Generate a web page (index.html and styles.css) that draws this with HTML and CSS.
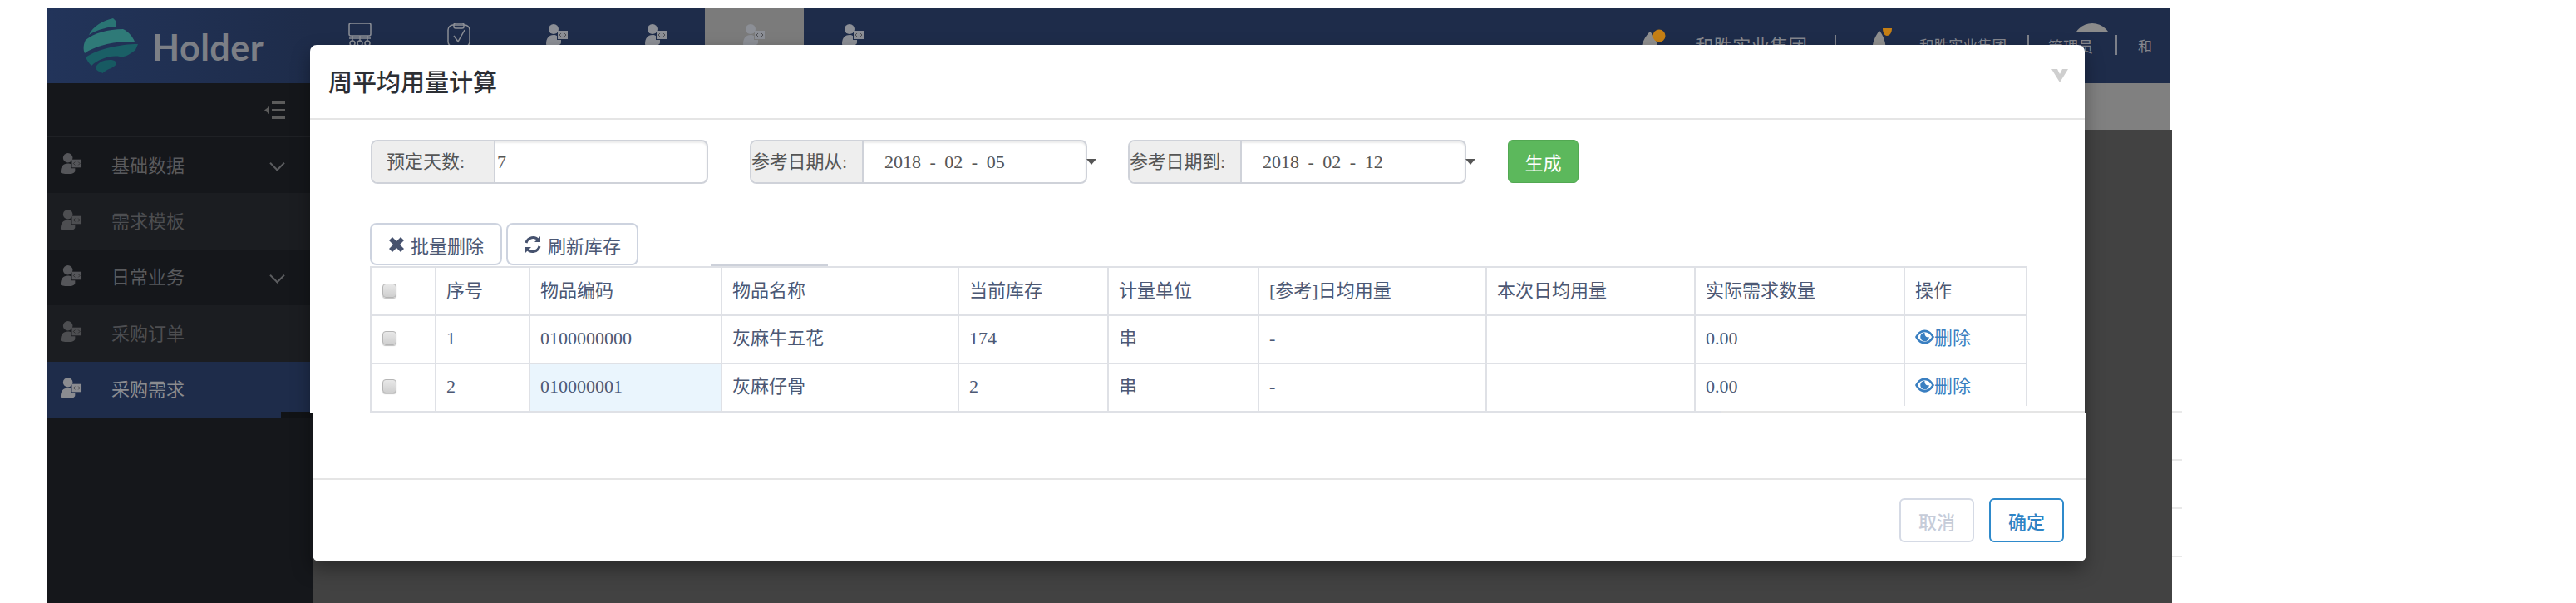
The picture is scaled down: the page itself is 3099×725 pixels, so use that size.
FILE: index.html
```html
<!DOCTYPE html>
<html lang="zh-CN">
<head>
    <meta charset="UTF-8">
    <title>周平均用量计算</title>
    <link rel="stylesheet" href="styles.css">
</head>
<body>
    <svg class="defs" width="0" height="0">
        <symbol id="user-badge" viewBox="0 0 28 28">
            <circle cx="10" cy="7" r="6"/>
            <path d="M1 25c0-7 3-11 9-11 2 0 3 .5 4 1v5h5v3c0 3-4 4-9 4s-9 0-9-2z"/>
            <path d="M15 9h12v10H15z"/>
            <path d="M19 12l-2 2 2 2M23 12l2 2-2 2" fill="none" stroke="#000" stroke-opacity=".45" stroke-width="1"/>
        </symbol>
        <symbol id="eye" viewBox="0 0 24 20">
            <path fill-rule="evenodd" d="M12 1C6 1 2 6 0 10c2 4 6 9 12 9s10-5 12-9c-2-4-6-9-12-9zm0 3c4 0 7 2.500 9 6-2 3.500-5 6-9 6s-7-2.500-9-6c2-3.500 5-6 9-6z"/>
            <path d="M12 4.500a5.500 5.500 0 1 0 5.500 5.500c-3 1-6-1-5.500-5.500z"/>
        </symbol>
    </svg>

    <div class="app">
        <!-- Top bar -->
        <header class="topbar">
            <div class="logo">
                <svg class="logo-mark" width="68" height="66" viewBox="0 0 68 66">
                    <path d="M36 0C24 3 12 9 7 20c10-7 26-10 32-10 2-4 1-7-3-10z" fill="#2a7474"/>
                    <path d="M3 26C0 32 0 38 2 42c12-9 36-15 60-14 -2-5-7-12-14-15C30 13 13 18 3 26z" fill="#2f7a78"/>
                    <path d="M3 47c2 4 4 7 7 10 8-8 24-13 34-11 8 1 12-3 19-8l3-7C45 31 17 37 3 47z" fill="#1a5f66"/>
                    <path d="M22 52c5-2 14-3 17 0 3 3-2 7-8 9-4 2-7 4-7 5-6-2-10-5-9-7 1-2 3-5 7-7z" fill="#175a62"/>
                </svg>
                <span class="logo-text">Holder</span>
            </div>
            <nav class="topnav">
                <a class="tile">
                    <svg width="28" height="28" viewBox="0 0 28 28" fill="none" stroke="#8c8f96" stroke-width="1.500">
                        <rect x="1" y="0" width="26" height="15" rx="2"/>
                        <path d="M5 15v6M14 15v6M23 15v6M1 18h26"/>
                        <circle cx="5" cy="24" r="3"/><circle cx="14" cy="24" r="3"/><circle cx="23" cy="24" r="3"/>
                    </svg>
                </a>
                <a class="tile">
                    <svg width="28" height="28" viewBox="0 0 28 28" fill="none" stroke="#8c8f96" stroke-width="1.500">
                        <rect x="1" y="2" width="26" height="26" rx="6"/>
                        <rect x="8" y="0" width="12" height="6" rx="2"/>
                        <path d="M8 15l5 7 8-14"/>
                    </svg>
                </a>
                <a class="tile"><svg class="badge-icon"><use href="#user-badge"/></svg></a>
                <a class="tile"><svg class="badge-icon"><use href="#user-badge"/></svg></a>
                <a class="tile tile-active"><svg class="badge-icon"><use href="#user-badge"/></svg></a>
                <a class="tile"><svg class="badge-icon"><use href="#user-badge"/></svg></a>
            </nav>
            <div class="topright">
                <svg class="org-icon" width="30" height="30" viewBox="0 0 30 30">
                    <path d="M11 3c6 6 10 14 10 27H0C0 17 5 9 11 3z" fill="#8f8f8f"/>
                    <circle cx="22" cy="8" r="7.500" fill="#c57f14"/>
                </svg>
                <span class="org-name">和胜实业集团</span>
                <span class="bar bar-a"></span>
                <svg class="org-icon org-icon-small" width="26" height="30" viewBox="0 0 26 30">
                    <path d="M9 3c5 6 8 14 8 27H0C0 17 4 9 9 3z" fill="#8f8f8f"/>
                    <path d="M13 0h11c0 6-3 9-6 9s-5-4-5-9z" fill="#c57f14"/>
                </svg>
                <span class="org-name org-name-small">和胜实业集团</span>
                <span class="bar bar-b"></span>
                <span class="admin">管理员</span>
                <span class="avatar"></span>
                <span class="bar bar-c"></span>
                <span class="cut-name">和</span>
            </div>
        </header>

        <div class="workspace">
            <!-- Side menu -->
            <aside class="sidebar">
                <div class="side-top">
                    <svg width="26" height="21" viewBox="0 0 26 21" fill="#5c5c5c">
                        <path d="M9 0h16v3H9zM9 9h16v3H9zM9 18h16v3H9zM6 6v9L0 10.500z"/>
                    </svg>
                </div>
                <a class="side-item"><svg class="side-icon"><use href="#user-badge"/></svg><span>基础数据</span><i class="chev"></i></a>
                <a class="side-item side-item-alt"><svg class="side-icon"><use href="#user-badge"/></svg><span>需求模板</span></a>
                <a class="side-item"><svg class="side-icon"><use href="#user-badge"/></svg><span>日常业务</span><i class="chev"></i></a>
                <a class="side-item side-item-alt"><svg class="side-icon"><use href="#user-badge"/></svg><span>采购订单</span></a>
                <a class="side-item side-item-on"><svg class="side-icon"><use href="#user-badge"/></svg><span>采购需求</span></a>
            </aside>
            <main class="main">
                <div class="main-strip"></div>
                <div class="main-fill"></div>
            </main>
        </div>
    </div>

    <div class="ghost-lines"><div></div><div></div><div></div><div></div></div>

    <!-- Dialog -->
    <div class="modal">
        <div class="modal-top">
            <div class="modal-header">
                <h4>周平均用量计算</h4>
                <svg class="close" width="20" height="16" viewBox="0 0 20 16" fill="#cfcfcf">
                    <path d="M0 0h7l3 6 3-6h7l-10 16z"/>
                </svg>
            </div>

            <div class="filters">
                <div class="field field-days">
                    <label class="addon">预定天数:</label>
                    <span class="value value-days">7</span>
                </div>
                <div class="field field-from has-arrow">
                    <label class="addon addon-tight">参考日期从:</label>
                    <span class="value value-date">2018 - 02 - 05</span>
                </div>
                <div class="field field-to has-arrow">
                    <label class="addon addon-tight">参考日期到:</label>
                    <span class="value value-date">2018 - 02 - 12</span>
                </div>
                <button class="btn-make">生成</button>
            </div>

            <div class="tools">
                <button class="btn-tool">
                    <svg width="20" height="20" viewBox="0 0 20 20" fill="#46526e">
                        <path d="M5 1l5 5 5-5 4 4-5 5 5 5-4 4-5-5-5 5-4-4 5-5-5-5z"/>
                    </svg>
                    批量删除
                </button>
                <button class="btn-tool">
                    <svg width="22" height="22" viewBox="0 0 22 22" fill="none" stroke="#46526e" stroke-width="3">
                        <path d="M3 9a8.500 8.500 0 0 1 15-3"/>
                        <path d="M19 13a8.500 8.500 0 0 1-15 3"/>
                        <path d="M20 1v7h-7z" fill="#46526e" stroke="none"/>
                        <path d="M2 21v-7h7z" fill="#46526e" stroke="none"/>
                    </svg>
                    刷新库存
                </button>
            </div>
            <span class="tab-scrap"></span>

            <table class="grid">
                <colgroup>
                    <col class="c-check"><col class="c-no"><col class="c-code"><col class="c-name"><col class="c-stock">
                    <col class="c-unit"><col class="c-ref"><col class="c-now"><col class="c-need"><col class="c-op">
                </colgroup>
                <thead>
                    <tr>
                        <th><input type="checkbox"></th>
                        <th>序号</th>
                        <th>物品编码</th>
                        <th>物品名称</th>
                        <th>当前库存</th>
                        <th>计量单位</th>
                        <th>[参考]日均用量</th>
                        <th>本次日均用量</th>
                        <th>实际需求数量</th>
                        <th>操作</th>
                    </tr>
                </thead>
                <tbody>
                    <tr>
                        <td><input type="checkbox"></td>
                        <td>1</td>
                        <td>0100000000</td>
                        <td>灰麻牛五花</td>
                        <td>174</td>
                        <td>串</td>
                        <td>-</td>
                        <td></td>
                        <td>0.00</td>
                        <td><a class="op-link"><svg class="eye"><use href="#eye"/></svg>删除</a></td>
                    </tr>
                    <tr>
                        <td><input type="checkbox"></td>
                        <td>2</td>
                        <td class="cell-focus">010000001</td>
                        <td>灰麻仔骨</td>
                        <td>2</td>
                        <td>串</td>
                        <td>-</td>
                        <td></td>
                        <td>0.00</td>
                        <td><a class="op-link"><svg class="eye"><use href="#eye"/></svg>删除</a></td>
                    </tr>
                </tbody>
            </table>
            <div class="seam"></div>
        </div>

        <div class="modal-bottom">
            <div class="modal-gap"></div>
            <div class="modal-footer">
                <button class="btn-foot btn-cancel">取消</button>
                <button class="btn-foot btn-ok">确定</button>
            </div>
        </div>
    </div>
</body>
</html>
```

FILE: styles.css
```css
html, body {
    margin: 0;
    padding: 0;
    height: 725px;
    overflow: hidden;
    background-color: #fff;
}

body {
    position: relative;
    font-family: 'Liberation Serif', 'Noto Sans CJK SC', serif;
    font-size: 22px;
    color: #4c5874;
}

.defs {
    position: absolute;
}

.app {
    margin: 10px 0 0 57px;
    width: 2554px;
    height: 715px;
    display: flex;
    flex-direction: column;
}

/* Top bar */
.topbar {
    height: 90px;
    flex: none;
    display: flex;
    background-color: #1e2c4a;
    overflow: hidden;
}

.logo {
    width: 317px;
    flex: none;
    display: flex;
    align-items: center;
    padding-left: 43px;
    box-sizing: border-box;
    background: linear-gradient(90deg, #22345a, #1e2c4a);
}

.logo-mark {
    margin: 0 15px 0 0;
}

.logo-text {
    font-family: 'Lato', sans-serif;
    font-weight: 700;
    font-size: 43px;
    color: #7c7f86;
    letter-spacing: 0.5px;
    line-height: 1;
    margin-top: 2px;
}

.topnav {
    display: flex;
}

.tile {
    width: 118.500px;
    padding-top: 18px;
    display: flex;
    justify-content: center;
    align-items: flex-start;
}

.tile-active {
    background-color: #7b7b7b;
}

.badge-icon {
    width: 28px;
    height: 28px;
    fill: #8c8f96;
}

.topright {
    margin-left: auto;
    position: relative;
    display: flex;
    align-items: flex-start;
    color: #85878e;
    font-family: 'Noto Sans CJK SC', sans-serif;
    white-space: nowrap;
}

.org-icon {
    margin: 25px 35px 0 0;
}

.org-icon-small {
    margin: 24px 31px 0 0;
}

.org-name {
    font-size: 22.500px;
    line-height: 30px;
    margin-top: 29px;
    margin-right: 33px;
}

.org-name-small {
    font-size: 17.500px;
    margin-right: 25px;
}

.bar {
    width: 2px;
    height: 24px;
    margin-top: 32px;
    background-color: #7d8089;
}

.bar-a {
    margin-right: 43px;
}

.bar-b {
    margin-right: 23px;
}

.admin {
    font-size: 18px;
    line-height: 26px;
    margin-top: 32px;
    margin-right: 27px;
}

.bar-c {
    margin-right: 25px;
}

.avatar {
    position: absolute;
    left: 520px;
    top: 18px;
    width: 46px;
    height: 10px;
    overflow: hidden;
}

.avatar::before {
    content: "";
    display: block;
    width: 46px;
    height: 46px;
    border-radius: 50%;
    background-color: #8b8b8b;
}

.cut-name {
    width: 16px;
    margin-top: 30px;
    font-size: 17px;
    line-height: 30px;
    overflow: hidden;
    margin-right: 23px;
}

/* Side menu and page behind the dialog */
.workspace {
    flex: 1;
    display: flex;
}

.sidebar {
    width: 319px;
    flex: none;
    background-color: #15171b;
}

.side-top {
    height: 65px;
    box-sizing: border-box;
    padding: 22px 32px 0 0;
    display: flex;
    justify-content: flex-end;
    border-bottom: 1px solid #1f2125;
}

.side-item {
    height: 67.400px;
    display: flex;
    align-items: center;
    position: relative;
    padding-left: 15px;
    color: #595a5d;
    font-family: 'Noto Sans CJK SC', sans-serif;
    line-height: 1;
}

.side-item span {
    margin: -4px 0 0 35px;
}

.side-icon {
    width: 27px;
    height: 27px;
    margin-top: -4px;
    fill: #55565a;
}

.side-item-alt {
    background-color: #1b1d21;
    color: #4d4e51;
}

.side-item-alt .side-icon {
    fill: #4d4e51;
}

.side-item-on {
    background-color: #1e2c4a;
    color: #8b8c90;
}

.side-item-on .side-icon {
    fill: #8b8c90;
}

/* the screenshot has a black notch here */
.side-item-on::after {
    content: "";
    position: absolute;
    right: 0;
    bottom: 0;
    width: 38px;
    height: 7px;
    background-color: #111316;
}

.chev {
    position: absolute;
    left: 270px;
    top: 25px;
    width: 11px;
    height: 11px;
    border-right: 2px solid #5c5d60;
    border-bottom: 2px solid #5c5d60;
    transform: rotate(45deg);
}

.main {
    flex: 1;
    display: flex;
    flex-direction: column;
}

.main-strip {
    height: 56px;
    background-color: #808080;
}

.main-fill {
    flex: 1;
    margin-right: -2px;
    background-color: #424242;
}

.ghost-lines {
    position: absolute;
    left: 2613px;
    top: 494px;
    width: 12px;
}

.ghost-lines div {
    height: 56px;
    border-top: 2px solid #e9e9e9;
}

/* Dialog */
.modal {
    position: absolute;
    left: 373px;
    top: 54px;
    width: 2135px;
    height: 621px;
    box-shadow: 0 10px 22px rgba(0, 0, 0, 0.35);
    border-radius: 8px;
}

.modal-top {
    position: relative;
    height: 442px;
    overflow: hidden;
    background-color: #fff;
    border-radius: 8px 8px 0 0;
}

.modal-header {
    height: 88px;
    position: relative;
    border-bottom: 2px solid #e5e5e5;
}

.modal-header h4 {
    margin: 0;
    padding: 22px 0 0 22px;
    font-family: 'Noto Sans CJK SC', sans-serif;
    font-size: 29px;
    line-height: 42px;
    font-weight: 500;
    color: #2c2e33;
}

.close {
    position: absolute;
    right: 20px;
    top: 29px;
}

.filters {
    display: flex;
    align-items: flex-start;
    padding: 24px 0 0 73px;
}

.field {
    position: relative;
    height: 53px;
    box-sizing: border-box;
    display: flex;
    border: 2px solid #cfd2d9;
    border-radius: 8px;
    box-shadow: inset 0 2px 2px rgba(0, 0, 0, 0.08);
    color: #555;
}

.field-days {
    width: 406px;
    margin-right: 50px;
}

.field-from {
    width: 406px;
    margin-right: 49px;
}

.field-to {
    width: 407px;
    margin-right: 50px;
}

.has-arrow::after {
    content: "";
    position: absolute;
    right: -13px;
    top: 21px;
    border-style: solid;
    border-width: 7px 6px 0;
    border-color: #555 transparent transparent;
}

.addon {
    flex: none;
    width: 148px;
    box-sizing: border-box;
    padding-left: 17px;
    background-color: #eee;
    border-right: 2px solid #cfd2d9;
    border-radius: 6px 0 0 6px;
    line-height: 49px;
    white-space: nowrap;
}

.addon-tight {
    width: 135px;
    padding-left: 0;
    letter-spacing: -0.200px;
}

.value {
    line-height: 49px;
}

.value-days {
    padding-left: 2px;
}

.value-date {
    padding-left: 25px;
    word-spacing: 5px;
}

.btn-make {
    width: 85px;
    height: 52px;
    padding: 0;
    border: 1px solid #52a852;
    border-radius: 6px;
    background-color: #5cb85c;
    color: #fff;
    font-family: inherit;
    font-size: 22px;
}

.tools {
    display: flex;
    gap: 5px;
    padding: 47px 0 0 72px;
}

.btn-tool {
    width: 159px;
    height: 51px;
    padding: 0;
    display: flex;
    align-items: center;
    justify-content: center;
    gap: 7px;
    background-color: #fff;
    border: 2px solid #cdd3df;
    border-radius: 8px;
    color: #4c5874;
    font-family: inherit;
    font-size: 22px;
}

.tab-scrap {
    position: absolute;
    left: 482px;
    top: 263px;
    width: 141px;
    height: 3px;
    background-color: #cdd1da;
}

.grid {
    margin: 1px 0 0 72px;
    width: 1992px;
    table-layout: fixed;
    border-collapse: collapse;
}

.c-check { width: 78px; }
.c-no { width: 113px; }
.c-code { width: 231px; }
.c-name { width: 285px; }
.c-stock { width: 180px; }
.c-unit { width: 181px; }
.c-ref { width: 274px; }
.c-now { width: 251px; }
.c-need { width: 252px; }
.c-op { width: 147px; }

.grid th,
.grid td {
    height: 22px;
    padding: 17px 12px 17px 12px;
    border: 2px solid #dfe1e6;
    font-weight: normal;
    line-height: 22px;
    text-align: left;
    white-space: nowrap;
    overflow: hidden;
}

.grid td {
    padding: 16px 12px 18px 12px;
}

.grid input {
    appearance: none;
    display: block;
    width: 17px;
    height: 17px;
    margin: -2px 0 0 1px;
    border: 1px solid #b5b5b5;
    border-radius: 4px;
    background: linear-gradient(#e8e8e8, #cfcfcf);
    box-shadow: 0 1px 1px rgba(0, 0, 0, 0.25);
}

.cell-focus {
    background-color: #eaf5fd;
}

.op-link {
    color: #3a7fc1;
    display: flex;
    align-items: center;
}

.eye {
    width: 23px;
    height: 20px;
    margin-top: -4px;
    fill: #3a7fc1;
}

.seam {
    position: absolute;
    left: 1698px;
    right: 0;
    bottom: 0;
    height: 6px;
    background-color: #fff;
    border-bottom: 2px solid #e5e5e5;
}

.modal-bottom {
    height: 179px;
    margin: 0 -2px 0 3px;
    background-color: #fff;
    border-radius: 0 0 8px 8px;
}

.modal-gap {
    height: 79px;
    border-bottom: 2px solid #e5e5e5;
}

.modal-footer {
    display: flex;
    justify-content: flex-end;
    gap: 18px;
    padding: 22px 27px 0 0;
}

.btn-foot {
    width: 90px;
    height: 53px;
    padding: 0;
    background-color: #fff;
    border-radius: 6px;
    font-family: 'Noto Sans CJK SC', sans-serif;
    font-size: 22px;
    font-weight: 500;
}

.btn-cancel {
    border: 2px solid #d5dae5;
    color: #c6ccd9;
}

.btn-ok {
    border: 2px solid #2f8acb;
    color: #2f84c6;
}
```
